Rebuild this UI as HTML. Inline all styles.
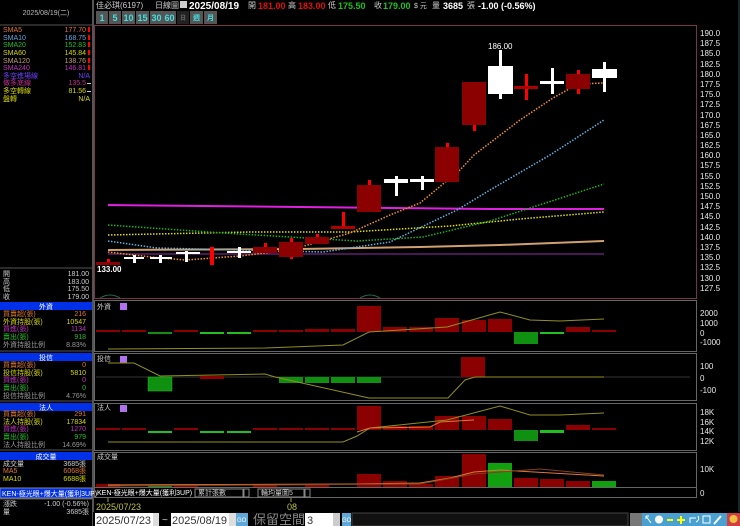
<!DOCTYPE html>
<html><head><meta charset="utf-8"><style>
html,body{margin:0;padding:0;background:#000;width:740px;height:526px;overflow:hidden}
svg{display:block}
text{font-family:"Liberation Sans","Noto Sans CJK TC",sans-serif}
.s{font-size:7px}
.ax{font-size:8px;fill:#e8e8e8;font-family:"Liberation Sans",sans-serif}
</style></head><body>
<svg width="740" height="526" viewBox="0 0 740 526" xmlns="http://www.w3.org/2000/svg">
<rect width="740" height="526" fill="#000"/>
<!-- left panel -->
<line x1="93" y1="0" x2="93" y2="526" stroke="#555" stroke-width="2"/>
<line x1="0" y1="25" x2="93" y2="25" stroke="#555"/>
<text x="46" y="15" class="s" fill="#bbb" text-anchor="middle">2025/08/19(二)</text>
<g class="s">
<text x="3" y="32" fill="#e07830">SMA5</text><text x="86" y="32" fill="#e07830" text-anchor="end">177.70</text>
<text x="3" y="40" fill="#60a8e0">SMA10</text><text x="86" y="40" fill="#60a8e0" text-anchor="end">168.75</text>
<text x="3" y="47" fill="#20c020">SMA20</text><text x="86" y="47" fill="#20c020" text-anchor="end">152.83</text>
<text x="3" y="55" fill="#d8d800">SMA60</text><text x="86" y="55" fill="#d8d800" text-anchor="end">145.84</text>
<text x="3" y="63" fill="#c0a070">SMA120</text><text x="86" y="63" fill="#c0a070" text-anchor="end">138.76</text>
<text x="3" y="70" fill="#c030c0">SMA240</text><text x="86" y="70" fill="#c030c0" text-anchor="end">146.81</text>
<text x="3" y="78" fill="#7040ff">多空進場線</text><text x="90" y="78" fill="#7040ff" text-anchor="end">N/A</text>
<text x="3" y="85" fill="#c03090">做多底線</text><text x="86" y="85" fill="#c03090" text-anchor="end">135.5</text>
<text x="3" y="93" fill="#d8d800">多空轉線</text><text x="86" y="93" fill="#d8d800" text-anchor="end">81.56</text>
<text x="3" y="101" fill="#d8d800">盤轉</text><text x="90" y="101" fill="#d8d800" text-anchor="end">N/A</text>
</g>
<g fill="#f00"><rect x="88" y="27" width="2" height="5"/><rect x="88" y="35" width="2" height="5"/><rect x="88" y="42" width="2" height="5"/><rect x="88" y="50" width="2" height="5"/><rect x="88" y="58" width="2" height="5"/><rect x="88" y="65" width="2" height="5"/></g>
<g fill="#ccc"><rect x="87" y="83" width="4" height="1"/><rect x="87" y="91" width="4" height="1"/></g>
<line x1="0" y1="268" x2="93" y2="268" stroke="#555"/>
<g class="s" fill="#ccc">
<text x="3" y="276">開</text><text x="89" y="276" text-anchor="end">181.00</text>
<text x="3" y="284">高</text><text x="89" y="284" text-anchor="end">183.00</text>
<text x="3" y="291">低</text><text x="89" y="291" text-anchor="end">175.50</text>
<text x="3" y="299">收</text><text x="89" y="299" text-anchor="end">179.00</text>
</g>
<!-- section headers -->
<g>
<rect x="0" y="302" width="92" height="8" fill="#0030e8"/><text x="46" y="309" class="s" fill="#fff" text-anchor="middle">外資</text>
<rect x="0" y="353" width="92" height="8" fill="#0030e8"/><text x="46" y="360" class="s" fill="#fff" text-anchor="middle">投信</text>
<rect x="0" y="403" width="92" height="8" fill="#0030e8"/><text x="46" y="410" class="s" fill="#fff" text-anchor="middle">法人</text>
<rect x="0" y="452" width="92" height="8" fill="#0030e8"/><text x="46" y="459" class="s" fill="#fff" text-anchor="middle">成交量</text>
<rect x="0" y="488" width="92" height="10" fill="#0030e8" stroke="#888"/><text x="2" y="496" class="s" fill="#fff">KEN-極光眼+爆大量(獲利3UP)</text>
</g>
<g class="s">
<text x="3" y="316" fill="#e07830">買賣超(張)</text><text x="86" y="316" fill="#e07830" text-anchor="end">216</text>
<text x="3" y="324" fill="#d8d800">外資持股(張)</text><text x="86" y="324" fill="#d8d800" text-anchor="end">10547</text>
<text x="3" y="331" fill="#c030c0">買進(張)</text><text x="86" y="331" fill="#c030c0" text-anchor="end">1134</text>
<text x="3" y="339" fill="#20c020">賣出(張)</text><text x="86" y="339" fill="#20c020" text-anchor="end">918</text>
<text x="3" y="347" fill="#999">外資持股比例</text><text x="86" y="347" fill="#999" text-anchor="end">8.83%</text>
<text x="3" y="367" fill="#e07830">買賣超(張)</text><text x="86" y="367" fill="#e07830" text-anchor="end">0</text>
<text x="3" y="375" fill="#d8d800">投信持股(張)</text><text x="86" y="375" fill="#d8d800" text-anchor="end">5810</text>
<text x="3" y="382" fill="#c030c0">買進(張)</text><text x="86" y="382" fill="#c030c0" text-anchor="end">0</text>
<text x="3" y="390" fill="#20c020">賣出(張)</text><text x="86" y="390" fill="#20c020" text-anchor="end">0</text>
<text x="3" y="398" fill="#999">投信持股比例</text><text x="86" y="398" fill="#999" text-anchor="end">4.76%</text>
<text x="3" y="416" fill="#e07830">買賣超(張)</text><text x="86" y="416" fill="#e07830" text-anchor="end">291</text>
<text x="3" y="424" fill="#d8d800">法人持股(張)</text><text x="86" y="424" fill="#d8d800" text-anchor="end">17834</text>
<text x="3" y="431" fill="#c030c0">買進(張)</text><text x="86" y="431" fill="#c030c0" text-anchor="end">1270</text>
<text x="3" y="439" fill="#20c020">賣出(張)</text><text x="86" y="439" fill="#20c020" text-anchor="end">979</text>
<text x="3" y="447" fill="#999">法人持股比例</text><text x="86" y="447" fill="#999" text-anchor="end">14.69%</text>
<text x="3" y="466" fill="#ccc">成交量</text><text x="86" y="466" fill="#ccc" text-anchor="end">3685張</text>
<text x="3" y="473" fill="#e07830">MA5</text><text x="86" y="473" fill="#e07830" text-anchor="end">6068張</text>
<text x="3" y="481" fill="#d8d800">MA10</text><text x="86" y="481" fill="#d8d800" text-anchor="end">6688張</text>
<text x="3" y="506" fill="#ccc">漲跌</text><text x="89" y="506" fill="#ccc" text-anchor="end">-1.00 (-0.56%)</text>
<text x="3" y="514" fill="#ccc">量</text><text x="89" y="514" fill="#ccc" text-anchor="end">3685張</text>
</g>
<line x1="0" y1="351" x2="93" y2="351" stroke="#555"/><line x1="0" y1="401" x2="93" y2="401" stroke="#555"/><line x1="0" y1="450" x2="93" y2="450" stroke="#555"/><line x1="0" y1="499" x2="93" y2="499" stroke="#555"/>

<!-- top bar -->
<g font-size="9" font-weight="bold">
<text x="96" y="8" fill="#ccc" font-weight="normal" font-size="8">佳必琪(6197)</text>
<text x="155" y="8" fill="#ccc" font-weight="normal" font-size="8">日線圖</text>
<rect x="180" y="1" width="7" height="7" fill="#ccc"/>
<text x="189" y="9" fill="#fff" font-size="10">2025/08/19</text>
<text x="248" y="8" fill="#ccc" font-weight="normal" font-size="8">開</text><text x="258" y="9" fill="#e01010">181.00</text>
<text x="288" y="8" fill="#ccc" font-weight="normal" font-size="8">高</text><text x="298" y="9" fill="#e01010">183.00</text>
<text x="328" y="8" fill="#ccc" font-weight="normal" font-size="8">低</text><text x="338" y="9" fill="#20c020">175.50</text>
<text x="374" y="8" fill="#ccc" font-weight="normal" font-size="8">收</text><text x="383" y="9" fill="#20c020">179.00</text>
<text x="414" y="8" fill="#ccc" font-weight="normal" font-size="7">$ 元</text>
<text x="432" y="8" fill="#ccc" font-weight="normal" font-size="8">量</text><text x="443" y="9" fill="#fff">3685</text>
<text x="467" y="8" fill="#ccc" font-weight="normal" font-size="8">張</text>
<text x="478" y="9" fill="#fff">-1.00 (-0.56%)</text>
</g>
<g font-size="9" font-weight="bold" fill="#40e0e0" text-anchor="middle">
<rect x="96" y="11" width="12" height="13" fill="#555"/><text x="102" y="21">1</text>
<rect x="109" y="11" width="12" height="13" fill="#555"/><text x="115" y="21">5</text>
<rect x="122" y="11" width="13" height="13" fill="#555"/><text x="128.5" y="21">10</text>
<rect x="136" y="11" width="13" height="13" fill="#555"/><text x="142.5" y="21">15</text>
<rect x="150" y="11" width="13" height="13" fill="#555"/><text x="156.5" y="21">30</text>
<rect x="163" y="11" width="13" height="13" fill="#555"/><text x="169.5" y="21">60</text>
<rect x="177" y="11" width="12" height="13" fill="#222"/><text x="183" y="20" fill="#666" font-size="6">日</text>
<rect x="190" y="11" width="13" height="13" fill="#555"/><text x="196.5" y="20" font-size="7">週</text>
<rect x="204" y="11" width="13" height="13" fill="#555"/><text x="210.5" y="20" font-size="7">月</text>
</g>

<!-- main chart box -->
<rect x="94.5" y="25.5" width="602" height="273" fill="none" stroke="#7a3448"/>
<g class="ax">
<text x="700" y="36">190.0</text><text x="700" y="46">187.5</text><text x="700" y="56">185.0</text><text x="700" y="67">182.5</text><text x="700" y="77">180.0</text><text x="700" y="87">177.5</text><text x="700" y="97">175.0</text><text x="700" y="107">172.5</text><text x="700" y="118">170.0</text><text x="700" y="128">167.5</text><text x="700" y="138">165.0</text><text x="700" y="148">162.5</text><text x="700" y="158">160.0</text><text x="700" y="168">157.5</text><text x="700" y="179">155.0</text><text x="700" y="189">152.5</text><text x="700" y="199">150.0</text><text x="700" y="209">147.5</text><text x="700" y="219">145.0</text><text x="700" y="230">142.5</text><text x="700" y="240">140.0</text><text x="700" y="250">137.5</text><text x="700" y="260">135.0</text><text x="700" y="270">132.5</text><text x="700" y="281">130.0</text><text x="700" y="291">127.5</text>
</g>
<!-- MA lines -->
<polyline points="108,205 300,207 490,209 604,209" fill="none" stroke="#e020e0" stroke-width="2"/>
<polyline points="108,254 604,254" fill="none" stroke="#602070" stroke-width="1.5"/>
<polyline points="108,250 300,249 420,247 500,245 604,241" fill="none" stroke="#d0a070" stroke-width="2"/>
<polyline points="108,235 250,232 350,232 450,226 520,219 604,212" fill="none" stroke="#e0e000" stroke-width="1.5" stroke-dasharray="1.5 1.5"/>
<polyline points="108,225 223,233 357,241 423,237 490,221 604,184" fill="none" stroke="#20b020" stroke-width="1.5" stroke-dasharray="1.5 1.5"/>
<polyline points="108,241 157,248 323,252 390,242 457,210 490,190 550,155 604,120" fill="none" stroke="#60b0e0" stroke-width="1.5" stroke-dasharray="1.5 1.5"/>
<polyline points="108,252 160,258 186,260 240,256 290,250 350,233 390,215 420,203 460,170 474,155 520,120 553,98 578,84 604,83" fill="none" stroke="#f09030" stroke-width="1.5" stroke-dasharray="1.5 1.5"/>
<!-- candles -->
<g fill="#8b0000">
<rect x="96" y="262" width="24" height="3"/>
<rect x="253" y="247" width="24" height="6"/>
<rect x="279" y="242" width="24" height="15"/>
<rect x="305" y="237" width="24" height="7"/>
<rect x="357" y="185" width="24" height="27"/>
<rect x="435" y="147" width="24" height="35"/>
<rect x="462" y="82" width="24" height="43"/>
<rect x="566" y="74" width="24" height="15"/>
</g>
<g fill="#f00">
<rect x="107" y="259" width="3" height="3"/>
<rect x="210" y="247" width="4" height="18"/>
<rect x="264" y="243" width="3" height="4"/>
<rect x="290" y="238" width="3" height="4"/><rect x="290" y="257" width="3" height="2"/>
<rect x="316" y="234" width="3" height="3"/>
<rect x="342" y="212" width="3" height="15"/><rect x="331" y="226" width="24" height="3" fill="#b00000"/>
<rect x="368" y="180" width="3" height="5"/>
<rect x="446" y="143" width="3" height="4"/>
<rect x="473" y="125" width="3" height="6"/>
<rect x="525" y="74" width="3" height="26"/><rect x="514" y="86" width="24" height="3" fill="#b00000"/>
<rect x="577" y="70" width="3" height="4"/><rect x="577" y="89" width="3" height="5"/>
</g>
<g fill="#fff">
<rect x="133" y="255" width="3" height="8"/><rect x="124" y="257" width="20" height="2"/>
<rect x="159" y="255" width="3" height="8"/><rect x="150" y="257" width="22" height="2"/>
<rect x="185" y="251" width="3" height="11"/><rect x="176" y="252" width="24" height="2"/>
<rect x="238" y="247" width="3" height="11"/><rect x="227" y="251" width="24" height="2"/>
<rect x="395" y="176" width="3" height="20"/><rect x="384" y="179" width="24" height="4"/>
<rect x="421" y="176" width="3" height="14"/><rect x="410" y="179" width="24" height="3"/>
<rect x="499" y="50" width="3" height="49"/><rect x="488" y="66" width="25" height="28"/>
<rect x="551" y="68" width="3" height="26"/><rect x="540" y="81" width="24" height="3"/>
<rect x="603" y="62" width="3" height="30"/><rect x="592" y="69" width="25" height="9"/>
</g>
<text x="97" y="272" font-size="8" font-weight="bold" fill="#fff" font-family="Liberation Sans,sans-serif">133.00</text>
<text x="488" y="49" font-size="8" fill="#fff" font-family="Liberation Sans,sans-serif">186.00</text>
<path d="M100,298 Q110,292 120,298 M360,298 Q370,292 380,298" fill="none" stroke="#2a6a50"/>

<!-- sub panels -->
<g fill="none" stroke="#666">
<rect x="94.5" y="300.5" width="602" height="51"/>
<rect x="94.5" y="353.5" width="602" height="47"/>
<rect x="94.5" y="403.5" width="602" height="47"/>
<rect x="94.5" y="452.5" width="602" height="35"/>
<rect x="94.5" y="487.5" width="602" height="10"/>
</g>
<g class="s" fill="#ccc">
<text x="97" y="309">外資</text><text x="97" y="361">投信</text><text x="97" y="410">法人</text><text x="97" y="459">成交量</text>
</g>
<g fill="#b070f0"><rect x="120" y="303" width="7" height="7"/><rect x="120" y="356" width="7" height="7"/><rect x="120" y="405" width="7" height="7"/></g>
<g class="ax">
<text x="700" y="316">2000</text><text x="700" y="326">1000</text><text x="700" y="336">0</text><text x="700" y="345">-1000</text>
<text x="700" y="369">100</text><text x="700" y="381">0</text><text x="700" y="393">-100</text>
<text x="700" y="415">18K</text><text x="700" y="425">16K</text><text x="700" y="434">14K</text><text x="700" y="444">12K</text>
<text x="700" y="472">10K</text><text x="700" y="496">0</text>
</g>
<!-- 外資 -->
<g fill="#8b0000">
<rect x="96" y="330" width="24" height="2"/><rect x="122" y="330" width="24" height="2"/><rect x="174" y="330" width="24" height="2"/>
<rect x="253" y="330" width="24" height="2"/><rect x="279" y="330" width="24" height="2"/><rect x="305" y="329" width="24" height="3"/><rect x="331" y="329" width="24" height="3"/>
<rect x="357" y="306" width="24" height="26"/><rect x="383" y="327" width="24" height="5"/><rect x="409" y="327" width="24" height="5"/>
<rect x="435" y="318" width="24" height="14"/><rect x="462" y="320" width="24" height="12"/><rect x="488" y="319" width="24" height="13"/>
<rect x="566" y="327" width="24" height="5"/><rect x="592" y="330" width="24" height="2"/>
</g>
<g fill="#109010"><rect x="148" y="332" width="24" height="2"/><rect x="200" y="332" width="24" height="2" fill="#20c020"/><rect x="227" y="332" width="24" height="2" fill="#20c020"/><rect x="514" y="332" width="24" height="12"/><rect x="540" y="332" width="24" height="2" fill="#20c020"/></g>
<polyline points="108,349 265,348 343,345 369,332 447,327 500,312 530,320 560,321 604,319" fill="none" stroke="#909020"/>
<!-- 投信 -->
<line x1="96" y1="377" x2="690" y2="377" stroke="#333"/>
<rect x="148" y="377" width="24" height="14" fill="#109010" stroke="#20c020" stroke-width=".5"/>
<g fill="#109010"><rect x="279" y="377" width="24" height="6"/><rect x="305" y="377" width="24" height="6"/><rect x="331" y="377" width="24" height="6"/><rect x="357" y="377" width="24" height="6"/></g>
<rect x="200" y="376" width="24" height="3" fill="#8b0000"/>
<rect x="461" y="357" width="24" height="20" fill="#8b0000"/>
<polyline points="108,363 134,363 160,376 265,374 275,377 369,398 448,398 465,380 475,377 604,377" fill="none" stroke="#909020"/>
<!-- 法人 -->
<g fill="#8b0000">
<rect x="96" y="428" width="24" height="2"/><rect x="122" y="428" width="24" height="2"/><rect x="174" y="428" width="24" height="2"/>
<rect x="253" y="428" width="24" height="2"/><rect x="279" y="428" width="24" height="2"/><rect x="305" y="428" width="24" height="2"/><rect x="331" y="428" width="24" height="2"/>
<rect x="357" y="406" width="24" height="24"/><rect x="383" y="426" width="24" height="4"/><rect x="409" y="426" width="24" height="4"/>
<rect x="435" y="416" width="24" height="14"/><rect x="462" y="416" width="24" height="14"/><rect x="488" y="419" width="24" height="11"/>
<rect x="566" y="425" width="24" height="5"/><rect x="592" y="428" width="24" height="2"/>
</g>
<g fill="#20c020"><rect x="148" y="431" width="24" height="2"/><rect x="200" y="431" width="24" height="2"/><rect x="227" y="431" width="24" height="2"/><rect x="514" y="430" width="24" height="11" fill="#109010"/><rect x="540" y="430" width="24" height="3"/></g>
<polyline points="108,442 343,442 357,436 370,428 447,420 500,406 530,415 560,415 604,413" fill="none" stroke="#909020"/>
<polyline points="357,432 370,428 430,427 440,422 474,420" fill="none" stroke="#e07830"/>
<!-- 成交量 -->
<g fill="#8b0000">
<rect x="96" y="484" width="24" height="3"/><rect x="174" y="485" width="24" height="2"/><rect x="253" y="485" width="24" height="2"/><rect x="305" y="485" width="24" height="2"/>
<rect x="357" y="474" width="24" height="13"/><rect x="383" y="481" width="24" height="6"/><rect x="409" y="484" width="24" height="3"/>
<rect x="435" y="476" width="24" height="11"/><rect x="462" y="454" width="24" height="33"/>
<rect x="514" y="478" width="24" height="9"/><rect x="540" y="479" width="24" height="8"/><rect x="566" y="481" width="24" height="6"/>
</g>
<g fill="#109010"><rect x="148" y="485" width="24" height="2"/><rect x="488" y="463" width="24" height="24" fill="#10a010"/><rect x="592" y="481" width="24" height="6" fill="#10a010"/></g>
<polyline points="108,485 360,484 420,483 450,478 474,472 500,470 604,476" fill="none" stroke="#e07830"/>
<polyline points="108,486 420,484 474,474 540,469 604,475" fill="none" stroke="#804020"/>
<!-- bottom row -->
<text x="97" y="495" class="s" fill="#fff">KEN-極光眼+爆大量(獲利3UP)</text>
<rect x="195" y="489" width="48" height="8" fill="#000" stroke="#888"/><text x="198" y="495" class="s" fill="#ccc">累計張數</text><rect x="244" y="489" width="5" height="8" fill="#000" stroke="#888"/>
<rect x="258" y="489" width="46" height="8" fill="#000" stroke="#888"/><text x="261" y="495" class="s" fill="#ccc">輪均量圖5</text><rect x="305" y="489" width="5" height="8" fill="#000" stroke="#888"/>
<line x1="108" y1="498" x2="108" y2="502" stroke="#a0a020"/><line x1="291" y1="498" x2="291" y2="502" stroke="#a0a020"/>
<text x="96" y="510" font-size="9" fill="#c0c040" font-family="Liberation Sans,sans-serif">2025/07/23</text>
<text x="287" y="510" font-size="9" fill="#c0c040" font-family="Liberation Sans,sans-serif">08</text>
<rect x="93" y="512" width="647" height="14" fill="#000"/>
<rect x="95" y="513" width="58" height="13" fill="#fff"/><text x="96" y="524" font-size="11" fill="#333" font-family="Liberation Sans,sans-serif">2025/07/23</text>
<rect x="153" y="513" width="6" height="13" fill="#ddd"/>
<text x="162" y="523" font-size="10" fill="#ccc">~</text>
<rect x="171" y="513" width="58" height="13" fill="#fff"/><text x="172" y="524" font-size="11" fill="#333" font-family="Liberation Sans,sans-serif">2025/08/19</text>
<rect x="229" y="513" width="7" height="13" fill="#ddd"/>
<rect x="236" y="513" width="12" height="13" fill="#60a8d8"/><text x="237" y="522" font-size="6" fill="#fff">GO</text>
<text x="253" y="524" font-size="13" fill="#888">保留空間</text>
<rect x="305" y="513" width="28" height="13" fill="#fff"/><text x="307" y="524" font-size="11" fill="#333">3</text>
<rect x="333" y="513" width="7" height="13" fill="#ccc"/>
<rect x="342" y="513" width="9" height="13" fill="#60a8d8"/><text x="342" y="522" font-size="6" fill="#fff">GO</text>
<rect x="352" y="513" width="276" height="13" fill="#111" stroke="#444"/>
<rect x="630" y="513" width="12" height="13" fill="#777"/>
<rect x="642" y="513" width="98" height="13" fill="#4aa0d0"/>
<g fill="#fff" stroke="#fff">
<circle cx="659" cy="519.5" r="4" stroke="none"/>
<rect x="667" y="519" width="6" height="2" stroke="none" fill="#ff0"/>
<rect x="677" y="519" width="8" height="2" stroke="none" fill="#ff0"/><rect x="680" y="516" width="2" height="8" stroke="none" fill="#ff0"/>
<path d="M646,516 L651,523 M646,516 h3 M646,516 v3" fill="none" stroke-width="1"/>
<path d="M690,523 v-5 h6 M698,516 q2,4 -2,6" fill="none"/>
<rect x="703" y="516" width="7" height="7" fill="none"/>
<path d="M714,524 L721,516" stroke-width="2"/>
</g>
<rect x="727" y="513" width="13" height="13" fill="#d04040"/><circle cx="733.5" cy="519" r="4" fill="#f0c040"/>
<line x1="739" y1="0" x2="739" y2="512" stroke="#205050"/>
</svg>
</body></html>
